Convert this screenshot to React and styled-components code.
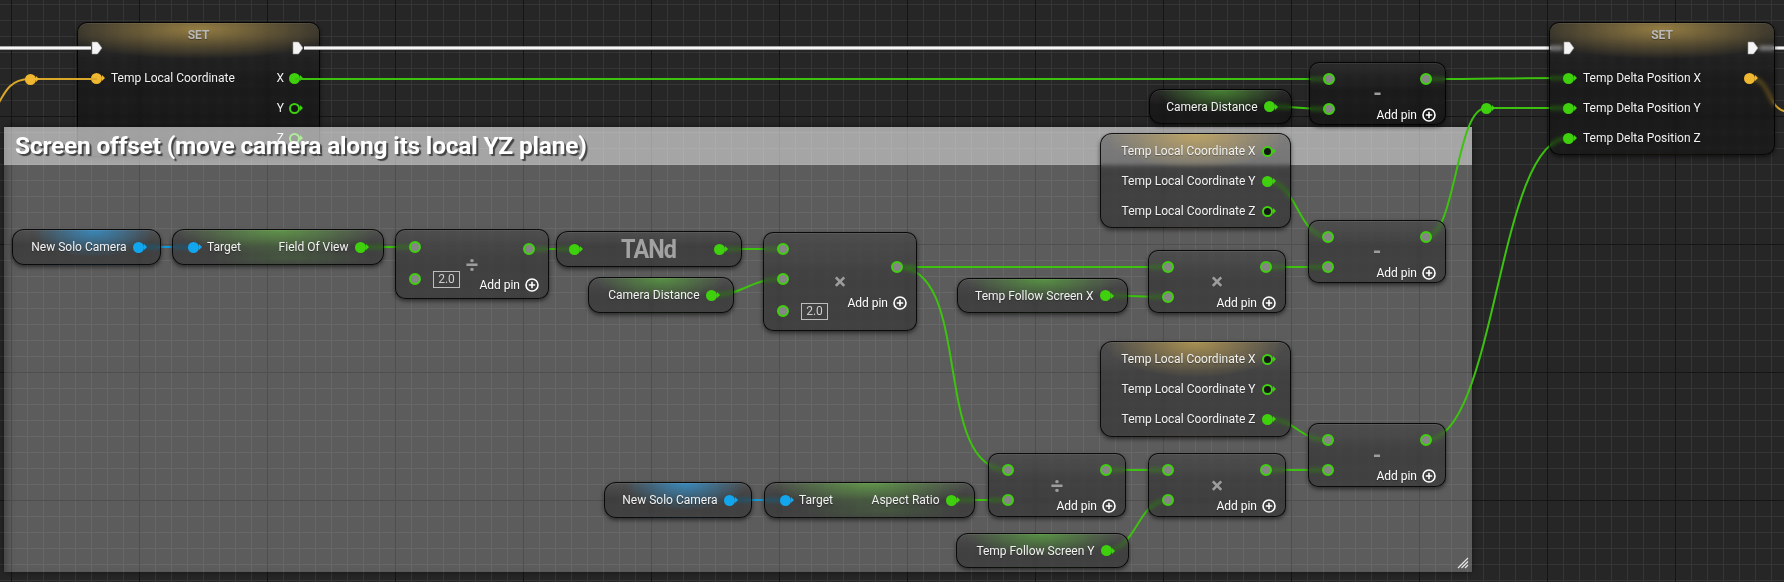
import React from 'react';
import styled, { createGlobalStyle } from 'styled-components';

const GREEN = '#3fd00e';
const GREEN_WIRE = '#3cc20f';
const BLUE = '#12a6ee';
const GOLD = '#f0b830';

const GlobalStyle = createGlobalStyle`
  html, body { margin: 0; padding: 0; background: #262626; overflow: hidden; }
  * { box-sizing: border-box; }
`;

const Canvas = styled.div`
  position: relative;
  width: 1784px;
  height: 582px;
  overflow: hidden;
  font-family: Roboto, "Noto Sans", sans-serif;
  color: #f2f2f2;
  background-color: #262626;
  background-image:
    linear-gradient(to right, #151515 1px, transparent 1px),
    linear-gradient(to bottom, #151515 1px, transparent 1px),
    linear-gradient(to right, #353535 1px, transparent 1px),
    linear-gradient(to bottom, #353535 1px, transparent 1px);
  background-size: 128px 128px, 128px 128px, 16px 16px, 16px 16px;
  background-position: 11px 116px, 11px 116px, 11px 4px, 11px 4px;
`;

const Comment = styled.div`
  position: absolute;
  left: 4px;
  top: 127px;
  width: 1468px;
  height: 445px;
  display: flex;
  flex-direction: column;
  background: rgba(255, 255, 255, 0.25);
  box-shadow: inset 8px 0 10px -6px rgba(0, 0, 0, 0.35), 0 0 6px rgba(0, 0, 0, 0.45);
  z-index: 2;
`;

const CommentHeader = styled.div`
  height: 38px;
  display: flex;
  align-items: center;
  padding: 0 0 2px 11px;
  background: rgba(255, 255, 255, 0.45);
  font-size: 24.5px;
  font-weight: 700;
  color: #fff;
  text-shadow: 2px 2px 1px rgba(0, 0, 0, 0.6);
  letter-spacing: -0.2px;
`;

const Grip = styled.svg`
  position: absolute;
  right: 3px;
  bottom: 3px;
`;

const Wires = styled.svg`
  position: absolute;
  left: 0;
  top: 0;
  z-index: 3;
  pointer-events: none;
`;

const NodeBox = styled.div`
  position: absolute;
  left: ${p => p.$x}px;
  top: ${p => p.$y}px;
  width: ${p => p.$w}px;
  height: ${p => p.$h}px;
  border-radius: ${p => p.$r || 10}px;
  border: 1px solid rgba(0, 0, 0, 0.85);
  background: ${p => (p.$glow ? `${p.$glow}, ` : '')}linear-gradient(to bottom, rgba(255, 255, 255, 0.07), rgba(255, 255, 255, 0) 45%), rgba(0, 0, 0, 0.3);
  backdrop-filter: blur(2px);
  box-shadow: 0 2px 4px rgba(0, 0, 0, 0.55), inset 0 1px 0 rgba(255, 255, 255, 0.07);
  z-index: ${p => p.$z || 4};
  font-size: 12px;
  text-shadow: 0 1px 1px rgba(0, 0, 0, 0.35);
  white-space: nowrap;
`;

const glow = (rgba, wx = 45, hy = 70, cx = 50) =>
  `radial-gradient(ellipse ${wx}% ${hy}% at ${cx}% 0%, ${rgba}, rgba(0, 0, 0, 0) 100%)`;

/* ---------- pins ---------- */

const DataPin = styled.span`
  position: relative;
  display: inline-block;
  flex: none;
  width: 11px;
  height: 11px;
  margin-right: 4px;
  border-radius: 50%;
  border: 2px solid ${p => p.$color};
  background: ${p => (p.$hollow ? '#151515' : p.$color)};
  &::after {
    content: '';
    position: absolute;
    left: 9px;
    top: 50%;
    margin-top: -3px;
    border-left: 3px solid ${p => p.$color};
    border-top: 3px solid transparent;
    border-bottom: 3px solid transparent;
  }
`;

const MathPin = styled.span`
  display: inline-block;
  flex: none;
  width: 12px;
  height: 12px;
  border-radius: 50%;
  border: 2px solid ${GREEN};
  background: #868686;
`;

const Knot = styled(DataPin)`
  position: absolute;
  left: ${p => p.$x - 5.5}px;
  top: ${p => p.$y - 5.5}px;
  z-index: 4;
`;

const ExecPin = () => (
  <svg width="12" height="14" viewBox="0 0 12 14" style={{ flex: 'none' }}>
    <path d="M1 1 H6.5 L11 7 L6.5 13 H1 Z" fill="#f4f4f4" stroke="#9a9a9a" strokeWidth="0.6" />
  </svg>
);

const AddPinRow = styled.div`
  display: flex;
  align-items: center;
  gap: 5px;
  height: 14px;
  margin-top: 23px;
  font-size: 12px;
  color: #fff;
`;

const AddPin = () => (
  <AddPinRow>
    Add pin
    <svg width="14" height="14" viewBox="0 0 14 14">
      <circle cx="7" cy="7" r="6" fill="none" stroke="#fff" strokeWidth="1.6" />
      <path d="M7 3.8 V10.2 M3.8 7 H10.2" stroke="#fff" strokeWidth="1.6" />
    </svg>
  </AddPinRow>
);

/* ---------- SET node ---------- */

const SetTitle = styled.div`
  height: 20px;
  margin-top: 2px;
  line-height: 20px;
  text-align: center;
  font-size: 12px;
  font-weight: 700;
  color: #b9b9b9;
`;

const ExecRow = styled.div`
  height: 14px;
  margin-top: -4px;
  display: flex;
  justify-content: space-between;
  padding: 0 15px 0 13px;
`;

const SetRows = styled.div`
  margin-top: 8px;
  display: flex;
  flex-direction: column;
`;

const SetRow = styled.div`
  height: 30px;
  display: flex;
  align-items: center;
  justify-content: space-between;
  padding: 0 15px 0 13px;
`;

const Side = styled.div`
  display: flex;
  align-items: center;
  gap: ${p => p.$gap ?? 5}px;
`;

const SetNode = ({ x, w, h, z, rows }) => (
  <NodeBox
    $x={x}
    $y={22}
    $w={w}
    $h={h}
    $z={z}
    $glow={`radial-gradient(ellipse 62% 30px at 50% 6px, rgba(214, 176, 82, 0.62), rgba(0,0,0,0) 100%)`}
  >
    <SetTitle>SET</SetTitle>
    <ExecRow>
      <ExecPin />
      <ExecPin />
    </ExecRow>
    <SetRows>
      {rows.map((r, i) => (
        <SetRow key={i}>
          <Side>
            {r.left && <DataPin $color={r.left.color} />}
            {r.left && <span>{r.left.label}</span>}
          </Side>
          <Side $gap={5}>
            {r.right && r.right.label && <span>{r.right.label}</span>}
            {r.right && <DataPin $color={r.right.color} $hollow={r.right.hollow} />}
          </Side>
        </SetRow>
      ))}
    </SetRows>
  </NodeBox>
);

/* ---------- variable getters ---------- */

const VarBody = styled.div`
  height: 100%;
  display: flex;
  align-items: center;
  justify-content: flex-end;
  gap: 6px;
  padding-right: 12.5px;
`;

const VarNode = ({ x, y, w, h = 36, label, tint, pin }) => (
  <NodeBox $x={x} $y={y} $w={w} $h={h} $r={12} $glow={tint}>
    <VarBody>
      <span>{label}</span>
      <DataPin $color={pin} />
    </VarBody>
  </NodeBox>
);

const SplitBody = styled.div`
  padding: 2px 13.5px 0 0;
  display: flex;
  flex-direction: column;
`;

const SplitRow = styled.div`
  height: 30px;
  display: flex;
  align-items: center;
  justify-content: flex-end;
  gap: 6px;
`;

const SplitVarNode = ({ y, h, filled }) => (
  <NodeBox $x={1100} $y={y} $w={191} $h={h} $r={12} $glow={glow('rgba(226, 186, 86, 0.62)', 48, 38)}>
    <SplitBody>
      {['X', 'Y', 'Z'].map(a => (
        <SplitRow key={a}>
          <span>Temp Local Coordinate {a}</span>
          <DataPin $color={GREEN} $hollow={filled !== a} />
        </SplitRow>
      ))}
    </SplitBody>
  </NodeBox>
);

/* ---------- property getter (Target -> value) ---------- */

const PropBody = styled.div`
  height: 100%;
  display: flex;
  align-items: center;
  justify-content: space-between;
  padding: 0 13.5px 0 14.5px;
`;

const PropNode = ({ x, y, w, label }) => (
  <NodeBox
    $x={x}
    $y={y}
    $w={w}
    $h={36}
    $r={12}
    $glow={`${glow('rgba(110, 205, 70, 0.55)', 48, 75)}, radial-gradient(ellipse 40% 30% at 55% 80%, rgba(90, 170, 60, 0.22), rgba(0,0,0,0) 100%)`}
  >
    <PropBody>
      <Side $gap={4.5}>
        <DataPin $color={BLUE} />
        <span>Target</span>
      </Side>
      <Side $gap={6}>
        <span>{label}</span>
        <DataPin $color={GREEN} />
      </Side>
    </PropBody>
  </NodeBox>
);

/* ---------- TANd ---------- */

const FuncBody = styled.div`
  height: 100%;
  display: flex;
  align-items: center;
  justify-content: space-between;
  padding: 0 12.5px 0 11.5px;
`;

const FuncTitle = styled.span`
  font-size: 26px;
  font-weight: 700;
  letter-spacing: -1px;
  color: #a2a2a2;
  text-shadow: none;
  transform: scaleX(0.9);
`;

/* ---------- math nodes ---------- */

const MathBody = styled.div`
  position: relative;
  height: 100%;
  display: flex;
`;

const InputCol = styled.div`
  display: flex;
  flex-direction: column;
  padding: ${p => p.$pt}px 0 0 13px;
`;

const InputRow = styled.div`
  height: ${p => (p.$tall ? 34 : 30)}px;
  display: flex;
  align-items: center;
`;

const ValueBox = styled.span`
  margin-left: 12px;
  width: 27px;
  height: 17px;
  border: 1px solid #bdbdbd;
  color: #cfcfcf;
  font-size: 12px;
  line-height: 15px;
  text-align: center;
  text-shadow: none;
`;

const RightCol = styled.div`
  margin-left: auto;
  display: flex;
  flex-direction: column;
  align-items: flex-end;
  padding-right: 9px;
`;

const OutRow = styled.div`
  height: 12px;
  margin-top: ${p => p.$top}px;
  margin-right: 4px;
  display: flex;
`;

const Operator = styled.div`
  position: absolute;
  inset: 0;
  display: flex;
  align-items: center;
  justify-content: center;
  font-size: 22px;
  font-weight: 700;
  color: #9d9d9d;
  text-shadow: none;
  pointer-events: none;
`;

const MathNode = ({ x, y, w, h, op, pt, inputs, outY }) => (
  <NodeBox $x={x} $y={y} $w={w} $h={h}>
    <MathBody>
      <Operator>{op}</Operator>
      <InputCol $pt={pt}>
        {inputs.map((v, i) => (
          <InputRow key={i} $tall={!!v}>
            <MathPin />
            {v && <ValueBox>{v}</ValueBox>}
          </InputRow>
        ))}
      </InputCol>
      <RightCol>
        <OutRow $top={outY - 7}>
          <MathPin />
        </OutRow>
        <AddPin />
      </RightCol>
    </MathBody>
  </NodeBox>
);

/* ---------- data ---------- */

const varGreen = glow('rgba(96, 200, 60, 0.55)', 45, 70);
const varBlue = glow('rgba(50, 160, 230, 0.7)', 42, 80, 55);

const getters = [
  { x: 12, y: 229, w: 149, label: 'New Solo Camera', tint: varBlue, pin: BLUE },
  { x: 1149, y: 89, w: 143, h: 35, label: 'Camera Distance', tint: varGreen, pin: GREEN },
  { x: 588, y: 277, w: 146, label: 'Camera Distance', tint: varGreen, pin: GREEN },
  { x: 957, y: 278, w: 171, h: 35, label: 'Temp Follow Screen X', tint: varGreen, pin: GREEN },
  { x: 604, y: 482, w: 148, label: 'New Solo Camera', tint: varBlue, pin: BLUE },
  { x: 956, y: 533, w: 173, h: 35, label: 'Temp Follow Screen Y', tint: varGreen, pin: GREEN },
];

const mathNodes = [
  { x: 395, y: 229, w: 154, h: 70, op: '÷', pt: 2, inputs: [null, '2.0'], outY: 20 },
  { x: 763, y: 232, w: 154, h: 99, op: '×', pt: 1, inputs: [null, null, '2.0'], outY: 35 },
  { x: 1309, y: 62, w: 137, h: 63, op: '-', pt: 1, inputs: [null, null], outY: 17 },
  { x: 1148, y: 250, w: 138, h: 63, op: '×', pt: 1, inputs: [null, null], outY: 17 },
  { x: 1308, y: 220, w: 138, h: 63, op: '-', pt: 1, inputs: [null, null], outY: 17 },
  { x: 988, y: 453, w: 138, h: 64, op: '÷', pt: 1, inputs: [null, null], outY: 17 },
  { x: 1148, y: 453, w: 138, h: 64, op: '×', pt: 1, inputs: [null, null], outY: 17 },
  { x: 1308, y: 423, w: 138, h: 64, op: '-', pt: 1, inputs: [null, null], outY: 17 },
];

const spline = ([x1, y1], [x2, y2], k = 0.5) => {
  const c = Math.max(Math.abs(x2 - x1) * k, 12);
  return `M${x1} ${y1} C${x1 + c} ${y1}, ${x2 - c} ${y2}, ${x2} ${y2}`;
};

const greenWires = [
  [[360, 247], [415, 247]],
  [[529, 249], [574, 249]],
  [[719, 249], [783, 249]],
  [[711, 295], [783, 279]],
  [[897, 267], [1168, 267]],
  [[897, 267], [1008, 470], 0.7],
  [[1105, 295.5], [1168, 297]],
  [[1266, 267], [1328, 267]],
  [[1267, 181], [1328, 237]],
  [[1426, 237], [1486, 108]],
  [[1486, 108], [1568, 108]],
  [[951, 500], [1008, 500]],
  [[1106, 470], [1168, 470]],
  [[1106, 550.5], [1168, 500]],
  [[1266, 470], [1328, 470]],
  [[1267, 419], [1328, 440]],
  [[1426, 440], [1568, 138]],
  [[294.5, 79], [1329, 79]],
  [[1269, 106.5], [1329, 109]],
  [[1426, 79], [1568, 78]],
];

const blueWires = [
  [[138, 247], [193, 247]],
  [[729, 500], [785, 500]],
];

const execWires = [
  [[0, 48], [91, 48]],
  [[304, 48], [1563, 48]],
  [[1759, 48], [1790, 48]],
];

export default function App() {
  return (
    <>
      <GlobalStyle />
      <Canvas>
        <SetNode
          x={77}
          w={243}
          h={135}
          z={1}
          rows={[
            { left: { color: GOLD, label: 'Temp Local Coordinate' }, right: { color: GREEN, label: 'X' } },
            { right: { color: GREEN, label: 'Y', hollow: true } },
            { right: { color: GREEN, label: 'Z', hollow: true } },
          ]}
        />

        <Comment>
          <CommentHeader>Screen offset (move camera along its local YZ plane)</CommentHeader>
          <Grip width="12" height="12" viewBox="0 0 12 12">
            <path d="M11 1 L1 11 M11 4.5 L4.5 11 M11 8 L8 11" stroke="#e8e8e8" strokeWidth="1.2" />
          </Grip>
        </Comment>

        <Wires width="1784" height="582" viewBox="0 0 1784 582">
          {execWires.map(([a, b], i) => (
            <g key={i}>
              <path d={`M${a[0]} ${a[1]} H${b[0]}`} stroke="#8a8a8a" strokeWidth="4" fill="none" />
              <path d={`M${a[0]} ${a[1]} H${b[0]}`} stroke="#f6f6f6" strokeWidth="2.4" fill="none" />
            </g>
          ))}
          <path d="M-6 112 C6 88, 12 79, 30 79 H97" stroke="#d9a72a" strokeWidth="2" fill="none" />
          <path d="M1750 78 C1772 78, 1766 112, 1790 112" stroke="#d9a72a" strokeWidth="2" fill="none" />
          {blueWires.map(([a, b], i) => (
            <path key={i} d={spline(a, b)} stroke="#1398d8" strokeWidth="2" fill="none" />
          ))}
          {greenWires.map(([a, b, k], i) => (
            <path key={i} d={spline(a, b, k)} stroke={GREEN_WIRE} strokeWidth="2" fill="none" />
          ))}
        </Wires>

        <Knot $x={30} $y={79} $color={GOLD} />
        <Knot $x={1486} $y={108} $color={GREEN} />

        <SetNode
          x={1549}
          w={226}
          h={133}
          rows={[
            { left: { color: GREEN, label: 'Temp Delta Position X' }, right: { color: GOLD } },
            { left: { color: GREEN, label: 'Temp Delta Position Y' } },
            { left: { color: GREEN, label: 'Temp Delta Position Z' } },
          ]}
        />

        {getters.map((g, i) => (
          <VarNode key={i} {...g} />
        ))}

        <SplitVarNode y={133} h={95} filled="Y" />
        <SplitVarNode y={341} h={96} filled="Z" />

        <PropNode x={172} y={229} w={212} label="Field Of View" />
        <PropNode x={764} y={482} w={211} label="Aspect Ratio" />

        <NodeBox $x={556} $y={231} $w={186} $h={36} $r={12}>
          <FuncBody>
            <DataPin $color={GREEN} />
            <FuncTitle>TANd</FuncTitle>
            <DataPin $color={GREEN} />
          </FuncBody>
        </NodeBox>

        {mathNodes.map((m, i) => (
          <MathNode key={i} {...m} />
        ))}
      </Canvas>
    </>
  );
}
